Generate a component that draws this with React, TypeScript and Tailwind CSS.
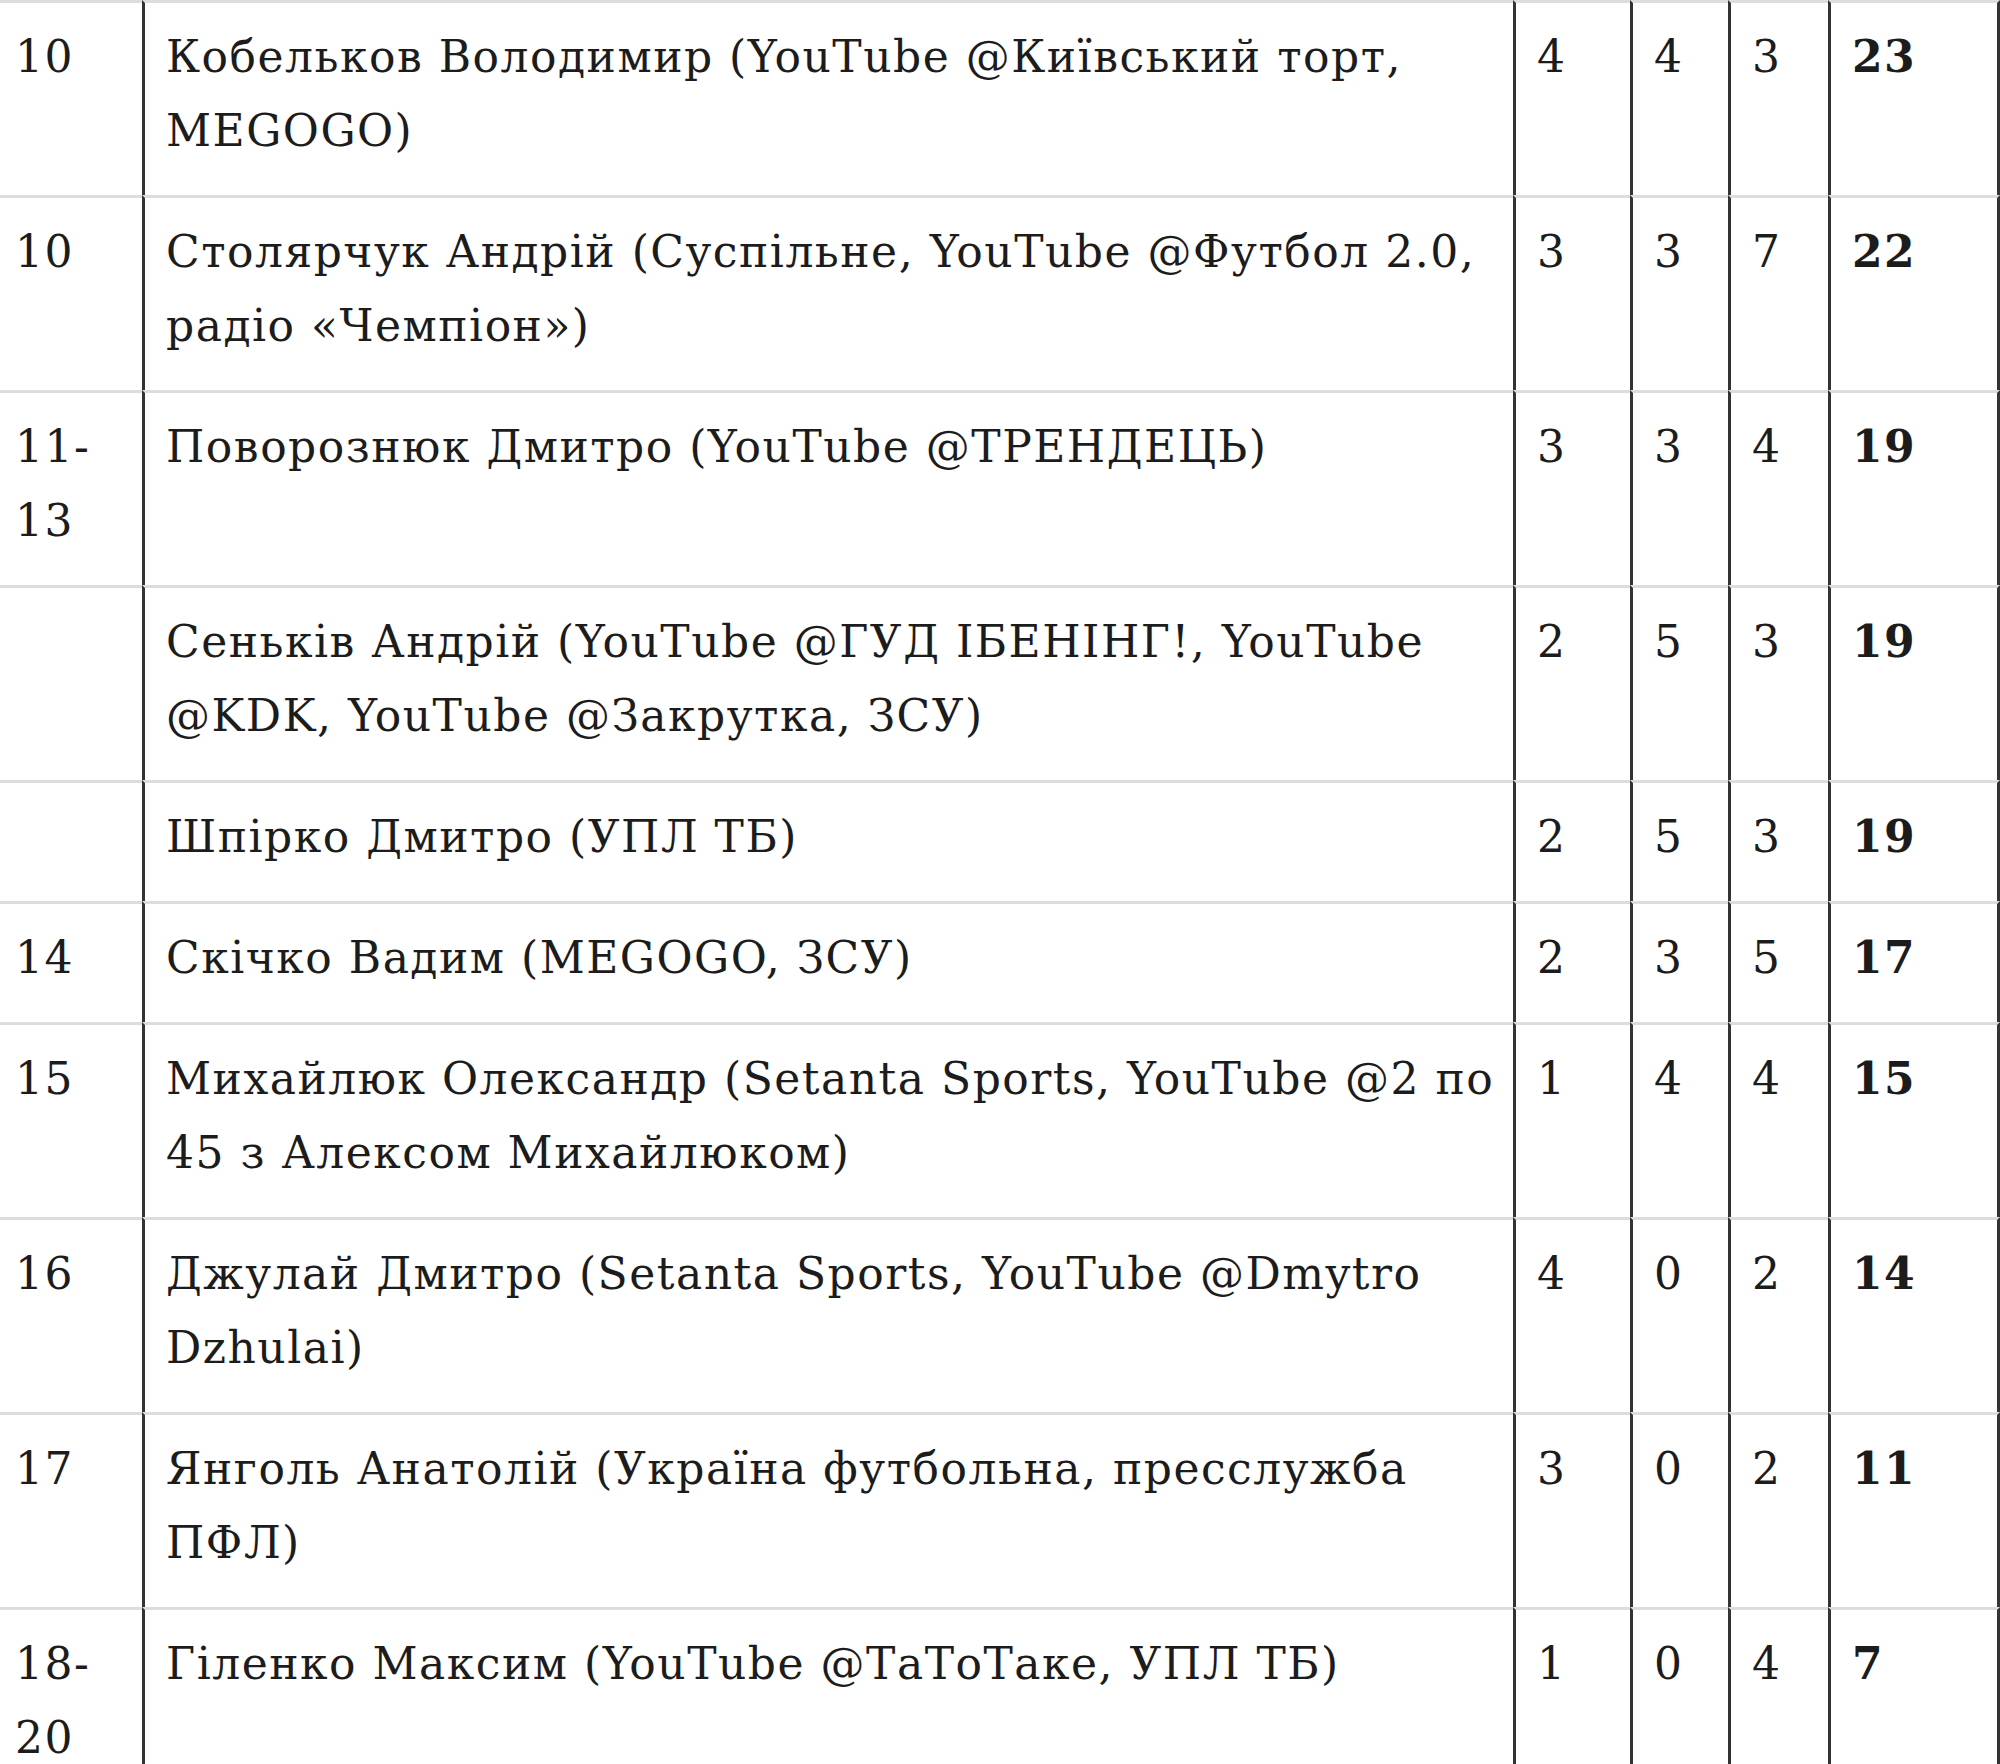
import React from "react";

type Row = {
  place: string;
  name: string;
  a: number;
  b: number;
  c: number;
  total: number;
};

const rows: Row[] = [
  { place: "10", name: "Кобельков Володимир (YouTube @Київський торт, MEGOGO)", a: 4, b: 4, c: 3, total: 23 },
  { place: "10", name: "Столярчук Андрій (Суспільне, YouTube @Футбол 2.0, радіо «Чемпіон»)", a: 3, b: 3, c: 7, total: 22 },
  { place: "11-13", name: "Поворознюк Дмитро (YouTube @ТРЕНДЕЦЬ)", a: 3, b: 3, c: 4, total: 19 },
  { place: "", name: "Сеньків Андрій (YouTube @ГУД ІБЕНІНГ!, YouTube @KDK, YouTube @Закрутка, ЗСУ)", a: 2, b: 5, c: 3, total: 19 },
  { place: "", name: "Шпірко Дмитро (УПЛ ТБ)", a: 2, b: 5, c: 3, total: 19 },
  { place: "14", name: "Скічко Вадим (MEGOGO, ЗСУ)", a: 2, b: 3, c: 5, total: 17 },
  { place: "15", name: "Михайлюк Олександр (Setanta Sports, YouTube @2 по 45 з Алексом Михайлюком)", a: 1, b: 4, c: 4, total: 15 },
  { place: "16", name: "Джулай Дмитро (Setanta Sports, YouTube @Dmytro Dzhulai)", a: 4, b: 0, c: 2, total: 14 },
  { place: "17", name: "Янголь Анатолій (Україна футбольна, пресслужба ПФЛ)", a: 3, b: 0, c: 2, total: 11 },
  { place: "18-20", name: "Гіленко Максим (YouTube @ТаТоТаке, УПЛ ТБ)", a: 1, b: 0, c: 4, total: 7 },
];

// light rule between rows, dark rule between columns
const cell = "border-t-[3px] border-t-[#dddddd] align-top pt-[17px] pb-[27px]";
const divided = "border-l-[3px] border-l-[#333333] pl-[21px] pr-[12px]";

export default function App() {
  return (
    <div className="h-[1764px] w-[2000px] overflow-hidden bg-white">
      <table
        className="w-[2000px] table-fixed border-separate border-spacing-0 text-[44px] leading-[74px] tracking-[1.5px] text-[#1c1c1c]"
        style={{ fontFamily: '"DejaVu Serif", serif' }}
      >
        <colgroup>
          <col className="w-[142px]" />
          <col className="w-[1371px]" />
          <col className="w-[117px]" />
          <col className="w-[98px]" />
          <col className="w-[100px]" />
          <col className="w-[172px]" />
        </colgroup>
        <tbody>
          {rows.map((r, i) => (
            <tr key={i}>
              <td className={`${cell} pl-[15px] pr-[20px] break-words`}>{r.place}</td>
              <td className={`${cell} ${divided}`}>{r.name}</td>
              <td className={`${cell} ${divided}`}>{r.a}</td>
              <td className={`${cell} ${divided}`}>{r.b}</td>
              <td className={`${cell} ${divided}`}>{r.c}</td>
              <td className={`${cell} ${divided} border-r-[3px] border-r-[#333333] font-bold`}>{r.total}</td>
            </tr>
          ))}
        </tbody>
      </table>
    </div>
  );
}
